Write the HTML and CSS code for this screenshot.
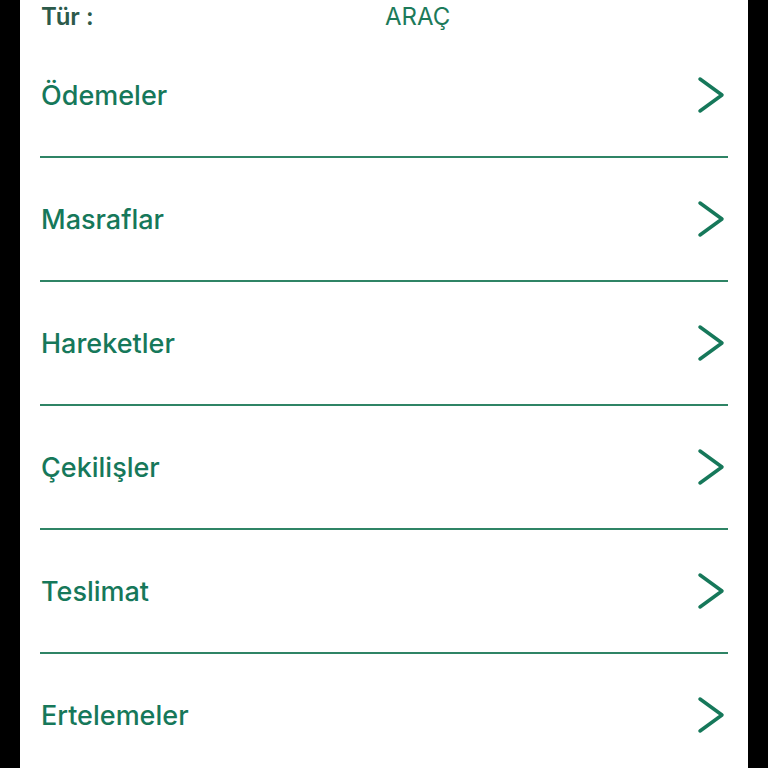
FILE: index.html
```html
<!DOCTYPE html>
<html lang="tr">
<head>
<meta charset="utf-8">
<link rel="stylesheet" href="styles.css">
</head>
<body>
<div class="screen">
  <div class="content">
    <div class="header">
      <span class="label">Tür :</span>
      <span class="value">ARAÇ</span>
    </div>
    <ul class="menu">
      <li class="item"><span class="title">Ödemeler</span><svg class="chev" viewBox="0 0 28 38" width="28" height="38"><polyline points="3,3 25,19 3,35"/></svg></li>
      <li class="item"><span class="title">Masraflar</span><svg class="chev" viewBox="0 0 28 38" width="28" height="38"><polyline points="3,3 25,19 3,35"/></svg></li>
      <li class="item"><span class="title">Hareketler</span><svg class="chev" viewBox="0 0 28 38" width="28" height="38"><polyline points="3,3 25,19 3,35"/></svg></li>
      <li class="item"><span class="title">Çekilişler</span><svg class="chev" viewBox="0 0 28 38" width="28" height="38"><polyline points="3,3 25,19 3,35"/></svg></li>
      <li class="item"><span class="title">Teslimat</span><svg class="chev" viewBox="0 0 28 38" width="28" height="38"><polyline points="3,3 25,19 3,35"/></svg></li>
      <li class="item"><span class="title">Ertelemeler</span><svg class="chev" viewBox="0 0 28 38" width="28" height="38"><polyline points="3,3 25,19 3,35"/></svg></li>
    </ul>
  </div>
</div>
</body>
</html>
```
FILE: styles.css
```css
html, body {
  margin: 0;
  padding: 0;
  background: #000;
  height: 768px;
  overflow: hidden;
}
.screen {
  margin: 0 20px;
  background: #fff;
  height: 768px;
  overflow: hidden;
}
.content {
  padding: 0 20px;
  font-family: Inter, "Liberation Sans", sans-serif;
}
.header {
  height: 34px;
  display: flex;
  align-items: center;
}
.label {
  width: 344px;
  padding-left: 1px;
  font-size: 24px;
  font-weight: 600;
  line-height: 30px;
  color: #2c5a4a;
}
.value {
  font-size: 24px;
  font-weight: 400;
  line-height: 30px;
  color: #1c7a5a;
}
.menu {
  list-style: none;
  margin: 0;
  padding: 0;
}
.item {
  height: 122px;
  border-bottom: 2px solid #2f8465;
  display: flex;
  align-items: center;
  justify-content: space-between;
}
.title {
  padding-left: 1px;
  font-size: 27px;
  font-weight: 500;
  color: #16785a;
}
.chev {
  margin-right: 3px;
  fill: none;
  stroke: #16785a;
  stroke-width: 3.5;
  stroke-linecap: round;
  stroke-linejoin: round;
}
```
